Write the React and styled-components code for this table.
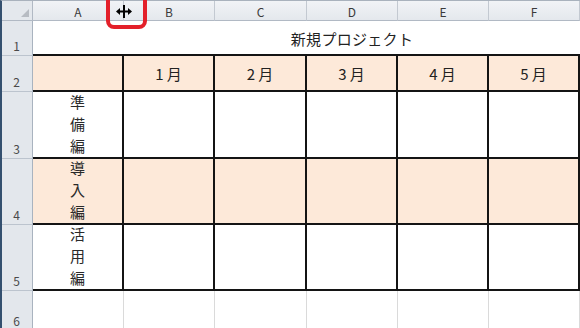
import React from "react";
import styled, { createGlobalStyle, css } from "styled-components";

const Global = createGlobalStyle`
  html, body { margin: 0; padding: 0; background: #ffffff; }
  body { overflow: hidden; font-family: "Noto Sans CJK JP", "Noto Sans", sans-serif; }
`;

const Frame = styled.div`
  position: relative;
  width: 580px;
  height: 328px;
  overflow: hidden;
`;

const Sheet = styled.div`
  display: grid;
  grid-template-columns: 31px 91px 91px 92px 91px 91px 91px;
  grid-template-rows: 20px 35px 36px 67px 66px 66px 40px;
  border-left: 2px solid #34506f;
  border-top: 1px solid #a9b2bd;
  width: 580px;
  box-sizing: border-box;
  font-family: "Noto Sans CJK JP", "Noto Sans", sans-serif;
  color: #1a1a1a;
`;

const headBg = css`
  background: linear-gradient(#f1f3f6, #e4e8ed);
  box-sizing: border-box;
`;

const Corner = styled.div`
  ${headBg}
  background: #e4e8ed;
  border-right: 1px solid #b1b9c4;
  border-bottom: 1px solid #b1b9c4;
  display: flex;
  align-items: flex-end;
  justify-content: flex-end;
  padding: 0 3px 3px 0;
`;

const Triangle = styled.div`
  width: 0;
  height: 0;
  border-left: 8px solid transparent;
  border-bottom: 8px solid #b7bcc3;
`;

const ColHead = styled.div`
  ${headBg}
  border-right: 1px solid #c3c9d1;
  border-bottom: 1px solid #b1b9c4;
  display: flex;
  align-items: center;
  justify-content: center;
  font-family: "Noto Sans CJK JP", "Liberation Sans", sans-serif;
  font-size: 12px;
  color: #3a3a3a;
  padding-top: 1px;
`;

const RowHead = styled.div`
  background: #e3e7ec;
  box-sizing: border-box;
  border-right: 1px solid #a9b3bf;
  border-bottom: 1px solid #bcc4ce;
  display: flex;
  align-items: flex-end;
  justify-content: center;
  font-family: "Noto Sans CJK JP", "Liberation Sans", sans-serif;
  font-size: 12px;
  color: #4a4a4a;
  padding-bottom: 1px;
  padding-right: 1px;
`;

const Cell = styled.div`
  box-sizing: border-box;
  background: ${(p) => (p.$fill ? "#fde9d9" : "#ffffff")};
  border-right: ${(p) => (p.$table ? "2px solid #141414" : "1px solid #dadada")};
  border-bottom: ${(p) => (p.$table ? "2px solid #141414" : "1px solid #dadada")};
  display: flex;
  align-items: center;
  justify-content: center;
  font-size: 15px;
`;

const MonthCell = styled(Cell)`
  letter-spacing: 3px;
  padding-left: 3px;
  color: #222;
`;

const TitleCell = styled.div`
  grid-column: 2 / span 6;
  box-sizing: border-box;
  border-bottom: 2px solid #141414;
  display: flex;
  align-items: flex-end;
  justify-content: center;
  padding-left: 91px;
  padding-bottom: 5px;
  font-size: 15px;
  letter-spacing: 0.3px;
  color: #222;
`;

const StackCell = styled(Cell)`
  flex-direction: column;
  justify-content: flex-end;
  line-height: 22px;
  font-size: 15px;
  color: #2a2a2a;
`;

const Char = styled.span`
  display: block;
  height: 22px;
`;

const Highlight = styled.div`
  position: absolute;
  left: 106px;
  top: -8px;
  width: 41px;
  height: 37px;
  box-sizing: border-box;
  border: 4px solid #e3202a;
  border-radius: 8px;
`;

const CursorIcon = styled.svg`
  position: absolute;
  left: 116px;
  top: 5px;
`;

const cols = ["A", "B", "C", "D", "E", "F"];
const months = ["1月", "2月", "3月", "4月", "5月"];
const sections = [
  { n: "3", label: "準備編", fill: false },
  { n: "4", label: "導入編", fill: true },
  { n: "5", label: "活用編", fill: false },
];

export default function App() {
  return (
    <Frame>
      <Global />
      <Sheet>
        <Corner>
          <Triangle />
        </Corner>
        {cols.map((c) => (
          <ColHead key={c}>{c}</ColHead>
        ))}

        <RowHead>1</RowHead>
        <TitleCell>新規プロジェクト</TitleCell>

        <RowHead>2</RowHead>
        <Cell $fill $table />
        {months.map((m) => (
          <MonthCell key={m} $fill $table>
            {m}
          </MonthCell>
        ))}

        {sections.map((s) => (
          <React.Fragment key={s.n}>
            <RowHead>{s.n}</RowHead>
            <StackCell $fill={s.fill} $table>
              {s.label.split("").map((ch, i) => (
                <Char key={i}>{ch}</Char>
              ))}
            </StackCell>
            {months.map((m) => (
              <Cell key={m} $fill={s.fill} $table />
            ))}
          </React.Fragment>
        ))}

        <RowHead>6</RowHead>
        {cols.map((c) => (
          <Cell key={c} />
        ))}
      </Sheet>

      <Highlight />
      <CursorIcon width="16" height="13" viewBox="0 0 16 13">
        <rect x="7" y="0" width="2" height="13" fill="#000" />
        <rect x="2" y="5.5" width="12" height="2" fill="#000" />
        <polygon points="0,6.5 4,3 4,10" fill="#000" />
        <polygon points="16,6.5 12,3 12,10" fill="#000" />
      </CursorIcon>
    </Frame>
  );
}
